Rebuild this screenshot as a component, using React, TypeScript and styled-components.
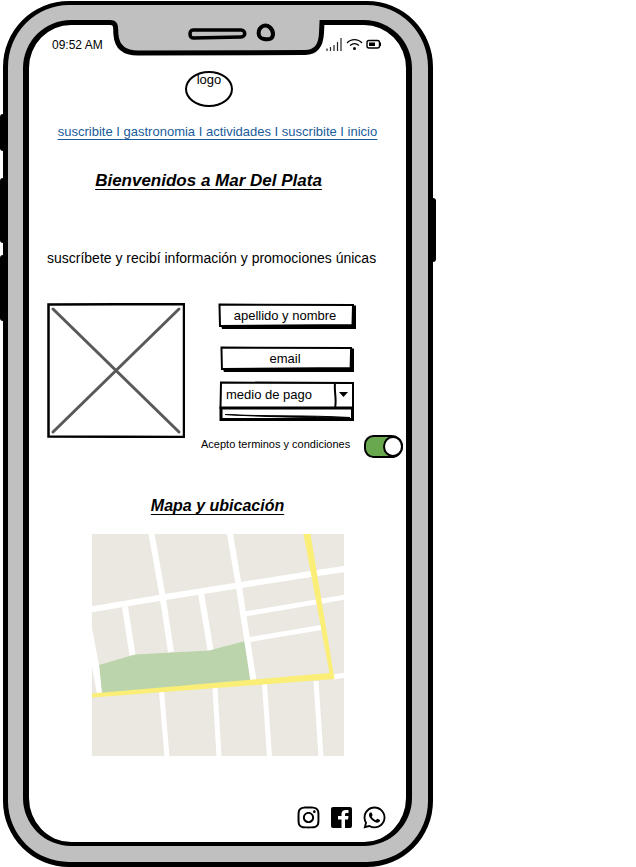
import React from "react";
import styled, { createGlobalStyle } from "styled-components";
import { FaInstagram, FaWhatsapp } from "react-icons/fa";

const GlobalStyle = createGlobalStyle`
  *, *::before, *::after { box-sizing: border-box; }
  body {
    margin: 0;
    background: #fff;
    color: #000;
    font-family: "Liberation Sans", Arial, sans-serif;
  }
`;

const Page = styled.div`
  padding: 1px 3px 0;
`;

const Phone = styled.div`
  position: relative;
  width: 100%;
  max-width: 430px;
  padding: 15px 16px 16px 15px;
  background: #c0c0c0;
  border: 5px solid #000;
  border-top-width: 4px;
  border-radius: 66px;
`;

const SideButton = styled.span<{ $side: "left" | "right"; $top: number; $length: number }>`
  position: absolute;
  ${({ $side }) => $side}: -8px;
  top: ${({ $top }) => $top}px;
  width: 6px;
  height: ${({ $length }) => $length}px;
  background: #000;
  border-radius: 3px;
`;

const Notch = styled.svg`
  position: absolute;
  top: 6px;
  left: 50%;
  width: 230px;
  height: 52px;
  margin-left: -115px;
`;

const Screen = styled.div`
  display: flex;
  flex-direction: column;
  background: #fff;
  border: 6px solid #000;
  border-top-width: 5px;
  border-bottom-width: 4px;
  border-radius: 48px;
`;

const StatusBar = styled.div`
  display: flex;
  justify-content: space-between;
  align-items: center;
  height: 39px;
  padding: 0 24px 0 23px;
  font-size: 12px;
`;

const StatusIcons = styled.svg`
  width: 56px;
  height: 16px;
`;

const Logo = styled.div`
  align-self: center;
  width: 48px;
  height: 36px;
  margin-top: 7px;
  margin-right: 17px;
  border: 2px solid #000;
  border-radius: 50%;
  font-size: 13px;
  line-height: 14px;
  text-align: center;
`;

const Nav = styled.nav`
  margin-top: 15px;
  color: #1a5b9a;
  font-size: 13px;
  line-height: 20px;
  text-align: center;
  text-decoration: underline;
  text-underline-offset: 3px;
`;

const NavLink = styled.a`
  color: inherit;
`;

const Heading = styled.h1<{ $size: number }>`
  margin: 0;
  font-size: ${({ $size }) => $size}px;
  line-height: 24px;
  font-style: italic;
  font-weight: 700;
  text-align: center;
  text-decoration: underline;
  text-decoration-thickness: 1px;
  text-underline-offset: 3px;
`;

const Welcome = styled.header`
  margin-top: 27px;
  padding-right: 18px;
`;

const Intro = styled.p`
  margin: 55px 0 0;
  padding-left: 18px;
  font-size: 14px;
  line-height: 20px;
`;

const Signup = styled.section`
  display: flex;
  gap: 16px;
  margin-top: 35px;
  padding: 0 3px 0 18px;
`;

const Placeholder = styled.svg`
  flex: none;
  width: 138px;
  height: 135px;
`;

const Form = styled.form`
  flex: 1;
  display: flex;
  flex-direction: column;
`;

const Field = styled.div<{ $gap: number; $indent: number; $width: number }>`
  position: relative;
  width: ${({ $width }) => $width}px;
  height: 27px;
  margin: 0 0 ${({ $gap }) => $gap}px ${({ $indent }) => $indent}px;
`;

const Frame = styled.svg`
  position: absolute;
  inset: 0;
  width: 100%;
  height: 100%;
  pointer-events: none;
`;

const TextInput = styled.input`
  position: relative;
  width: 100%;
  height: 25px;
  padding: 0 6px 0 2px;
  border: 0;
  background: transparent;
  color: #000;
  font: 13px "Liberation Sans", Arial, sans-serif;
  text-align: center;

  &::placeholder {
    color: #000;
    opacity: 1;
  }
`;

const SelectField = styled.div`
  position: relative;
  width: 138px;
  height: 41px;
  margin-left: 17px;
`;

const Select = styled.select`
  appearance: none;
  position: relative;
  width: 100%;
  height: 26px;
  padding: 0 20px 0 8px;
  border: 0;
  background: transparent;
  color: #000;
  font: 13px "Liberation Sans", Arial, sans-serif;
`;

const Terms = styled.label`
  display: flex;
  justify-content: space-between;
  margin-top: 13px;
  font-size: 11px;
  line-height: 18px;
  white-space: nowrap;
`;

const Toggle = styled.input`
  appearance: none;
  position: relative;
  flex: none;
  width: 39px;
  height: 23px;
  margin: 0;
  border: 2px solid #000;
  border-radius: 10px 12px 12px 10px;
  background: #fff;

  &:checked {
    background: #6aa84f;
  }

  &::after {
    content: "";
    position: absolute;
    top: -1px;
    left: -1px;
    width: 20px;
    height: 21px;
    border: 2px solid #000;
    border-radius: 50%;
    background: #fff;
  }

  &:checked::after {
    left: 17px;
  }
`;

const Location = styled.section`
  display: flex;
  flex-direction: column;
  align-items: center;
  margin-top: 36px;
`;

const MapView = styled.svg`
  width: 252px;
  height: 222px;
  margin-top: 16px;
`;

const Social = styled.footer`
  display: flex;
  justify-content: flex-end;
  gap: 8px;
  margin-top: 49px;
  padding: 0 19px 12px 0;
`;

const SocialLink = styled.a`
  display: flex;
  color: #000;
`;

const links = ["suscribite", "gastronomia", "actividades", "suscribite", "inicio"];

const wideRoads = [
  "M59 -3 70.700 63 79 118",
  "M137.500 -3 147 53 161.500 147",
  "M-1 75.500 70 63.500 146 51.500 225 39 253 35",
  "M33 73 40.500 121",
  "M109 59 118.500 116",
];

const narrowRoads = [
  "M153 80 253 63",
  "M158 105.500 229 93.500",
  "M241 143 253 141",
  "M69.500 157 75 223",
  "M123 154 127 223",
  "M172.500 150 177.500 223",
  "M224 147 229 223",
];

function PhoneNotch() {
  return (
    <Notch viewBox="103 11 230 52" aria-hidden="true">
      <path
        d="M103 14V25H113L117 31C116 45 121 54 135 54L305 53C319 53 322 42 322 31L323 23H333V14Z"
        fill="#c0c0c0"
      />
      <path
        d="M103 22.500H109C118 22 115 29 116 35C117 48 125 53 138 53L304 52.500C318 53 321 43 321.500 33L322 22.500H333"
        fill="none"
        stroke="#000"
        strokeWidth="5"
      />
      <path
        d="M193 30H241C246 30 246 37 241 37L193 38C189 38 189 30 193 30Z"
        fill="none"
        stroke="#000"
        strokeWidth="3.500"
      />
      <path
        d="M263 26C268 24 273 29 273 34C273 39 269 40 264 39C257 38 257 29 263 26Z"
        fill="none"
        stroke="#000"
        strokeWidth="4"
      />
    </Notch>
  );
}

function BoxFrame() {
  return (
    <Frame viewBox="0 0 138 27" preserveAspectRatio="none" aria-hidden="true">
      <path d="M3 22H133V2.500H138V26H4Z" fill="#000" />
      <path d="M1.500 1.500 135 2 134.500 22 2 23Z" fill="#fff" stroke="#000" strokeWidth="2" />
    </Frame>
  );
}

function FacebookIcon() {
  return (
    <svg width="25" height="25" viewBox="-2 -2 25 25" aria-hidden="true">
      <path
        fillRule="evenodd"
        d="M2 0H19Q21 0 21 2V19Q21 21 19 21H14V12.500H17L17.500 9H14V7.500C14 6.500 14.500 6 15.500 6H17.500V3H15C12 3 10.500 4.500 10.500 7V9H7V12.500H10.500V21H2Q0 21 0 19V2Q0 0 2 0Z"
      />
    </svg>
  );
}

function CityMap() {
  return (
    <MapView viewBox="0 0 252 222" role="img" aria-label="Mapa">
      <rect width="252" height="222" fill="#ebe8e1" />
      <path d="M7 131 43 120.500 117 116.500 153 107 160 147 10 160Z" fill="#bcd4ac" />
      <path d="M0 94 7 131 10 160 5 160 0 133Z" fill="#fff" />
      <g fill="none" stroke="#fff">
        {wideRoads.map((d) => (
          <path key={d} d={d} strokeWidth="6" />
        ))}
        {narrowRoads.map((d) => (
          <path key={d} d={d} strokeWidth="5" />
        ))}
      </g>
      <path
        d="M0 159.500 237.500 139 211.500 0H218.500L242.500 145 0 163.500Z"
        fill="#faee76"
      />
    </MapView>
  );
}

export default function App() {
  return (
    <>
      <GlobalStyle />
      <Page>
        <Phone>
          <SideButton $side="left" $top={109} $length={37} />
          <SideButton $side="left" $top={173} $length={65} />
          <SideButton $side="left" $top={250} $length={66} />
          <SideButton $side="right" $top={193} $length={64} />
          <Screen>
            <StatusBar>
              <time>09:52 AM</time>
              <StatusIcons viewBox="0 0 56 16" aria-hidden="true">
                <path
                  d="M1 11.500V14M4.500 10V14M8 8V14M11.500 5V14M15 1V14"
                  stroke="#222"
                  strokeWidth="1.200"
                  fill="none"
                />
                <path
                  d="M21 6C25 1.500 32 1.500 36 6M24 8.500C27 6 30 6 33 8.500"
                  stroke="#000"
                  strokeWidth="1.200"
                  fill="none"
                />
                <circle cx="28.500" cy="11.500" r="1.500" />
                <rect x="41" y="3.500" width="12.500" height="7.500" rx="2" fill="none" stroke="#000" strokeWidth="1.400" />
                <path d="M43 5.500H49V9H43ZM54 5.500H55V9H54Z" />
              </StatusIcons>
            </StatusBar>
            <Logo>logo</Logo>
            <Nav>
              {links.map((label, i) => (
                <React.Fragment key={i}>
                  {i > 0 && " I "}
                  <NavLink href="#">{label}</NavLink>
                </React.Fragment>
              ))}
            </Nav>
            <Welcome>
              <Heading $size={17}>Bienvenidos a Mar Del Plata</Heading>
            </Welcome>
            <Intro>suscríbete y recibí información y promociones únicas</Intro>
            <Signup>
              <Placeholder viewBox="0 0 138 135" role="img" aria-label="Imagen">
                <path d="M1.500 1.500 137 1V134L1.500 133.500Z" fill="#fff" stroke="#000" strokeWidth="2.500" />
                <path d="M6 6 132 129M132 6 6 129" stroke="#595959" strokeWidth="3" strokeLinecap="round" />
              </Placeholder>
              <Form>
                <Field $gap={16} $indent={17} $width={138}>
                  <BoxFrame />
                  <TextInput aria-label="apellido y nombre" placeholder="apellido y nombre" />
                </Field>
                <Field $gap={8} $indent={19} $width={134}>
                  <BoxFrame />
                  <TextInput type="email" aria-label="email" placeholder="email" />
                </Field>
                <SelectField>
                  <Frame viewBox="0 0 138 41" preserveAspectRatio="none" aria-hidden="true">
                    <path
                      d="M3 1.500 135 2V27H2.500ZM117 2C116 12 119 18 117 27"
                      fill="none"
                      stroke="#000"
                      strokeWidth="2"
                    />
                    <path d="M121 11H130L125.500 16Z" />
                    <path d="M3 27H134.500V38.500H3Z" fill="#fff" stroke="#000" strokeWidth="3" />
                    <path d="M7 33.500C45 35.500 90 34 132 36.500C90 37 40 35.500 7 33.500Z" stroke="#000" />
                  </Frame>
                  <Select aria-label="medio de pago">
                    <option>medio de pago</option>
                  </Select>
                </SelectField>
                <Terms>
                  Acepto terminos y condiciones
                  <Toggle type="checkbox" role="switch" defaultChecked />
                </Terms>
              </Form>
            </Signup>
            <Location>
              <Heading as="h2" $size={16}>Mapa y ubicación</Heading>
              <CityMap />
            </Location>
            <Social>
              <SocialLink href="#" aria-label="Instagram"><FaInstagram size={25} /></SocialLink>
              <SocialLink href="#" aria-label="Facebook"><FacebookIcon /></SocialLink>
              <SocialLink href="#" aria-label="WhatsApp"><FaWhatsapp size={25} /></SocialLink>
            </Social>
          </Screen>
          <PhoneNotch />
        </Phone>
      </Page>
    </>
  );
}
